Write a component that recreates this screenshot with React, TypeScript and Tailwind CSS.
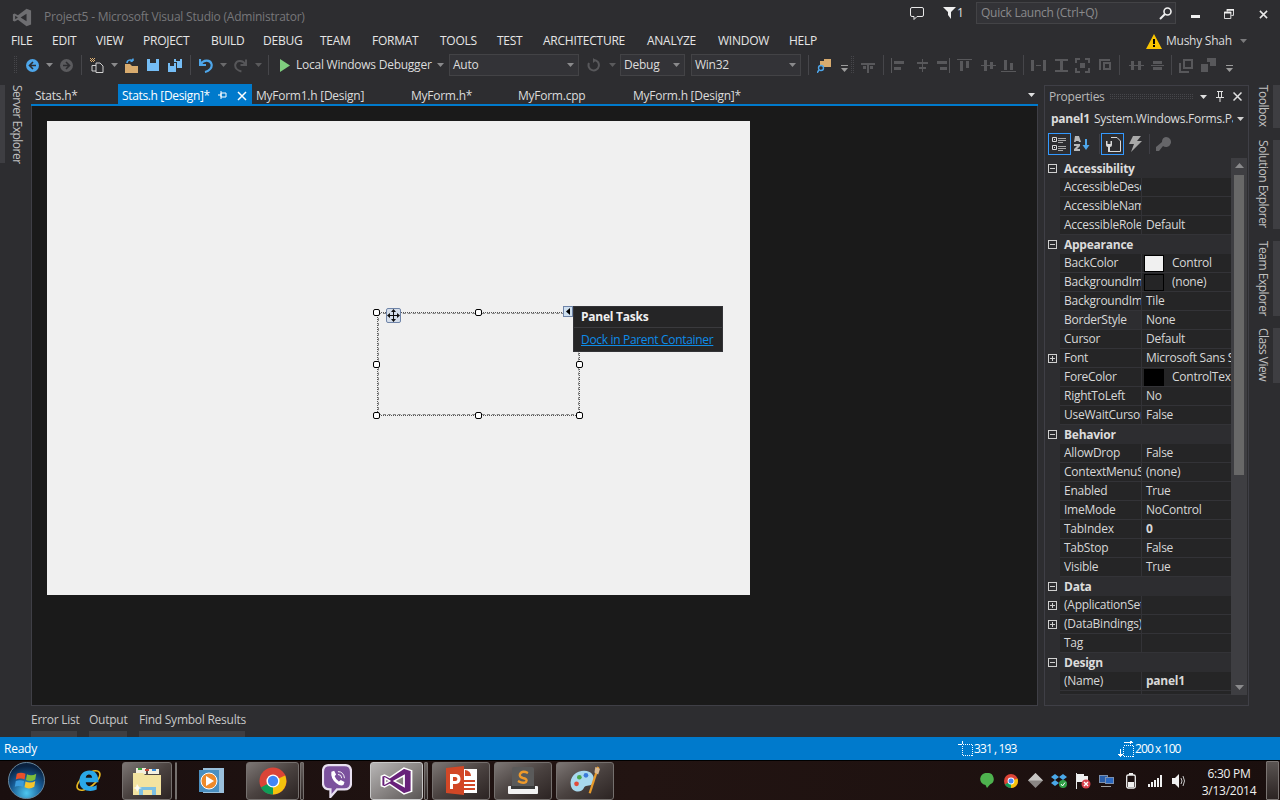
import React from "react";

const VSPATH = "M15 0 L5.5 9 L2 6.5 L0 7.5 V16.5 L2 17.5 L5.5 15 L15 24 L20 21.5 V2.5 Z M15 7 V17 L8.5 12 Z M2.5 9.5 L5.5 12 L2.5 14.5 Z";

function VS({ size, color, h, stroke }: { size: number; color: string; h?: number; stroke?: string }) {
  return (
    <svg width={size} height={h ?? size} viewBox="-1 -1 22 26" preserveAspectRatio="none">
      <path d={VSPATH} fill={color} fillRule="evenodd" stroke={stroke} strokeWidth={stroke ? 1.2 : 0} />
    </svg>
  );
}

function Drop({ c = "#8a8a8c", className = "" }: { c?: string; className?: string }) {
  return (
    <svg width="7" height="4" viewBox="0 0 7 4" className={`shrink-0 ${className}`}>
      <path d="M0 0H7L3.5 4Z" fill={c} />
    </svg>
  );
}

function Overflow({ className = "" }: { className?: string }) {
  return (
    <svg width="7" height="7" viewBox="0 0 7 7" className={`shrink-0 ${className}`}>
      <rect x="0" y="0" width="7" height="1" fill="#9a9a9a" />
      <path d="M0 3H7L3.5 7Z" fill="#9a9a9a" />
    </svg>
  );
}

function Grip({ w = 3, h = 18, className = "" }: { w?: number; h?: number; className?: string }) {
  return (
    <svg width={w} height={h} className={`shrink-0 ${className}`}>
      <defs>
        <pattern id={`g${w}${h}`} width="2" height="2" patternUnits="userSpaceOnUse">
          <rect width="1" height="1" fill="#46464a" />
        </pattern>
      </defs>
      <rect width={w} height={h} fill={`url(#g${w}${h})`} />
    </svg>
  );
}

function Sep({ className = "" }: { className?: string }) {
  return <div className={`w-px h-[20px] bg-[#46464a] shrink-0 ${className}`} />;
}

function Combo({ label, w, ml }: { label: string; w: string; ml: string }) {
  return (
    <div className={`${w} ${ml} h-[22px] shrink-0 border border-[#434346] bg-[#333337] flex items-center justify-between pl-[3px] pr-[4px] text-[#dcdcdc]`}>
      <span>{label}</span>
      <Drop />
    </div>
  );
}

function AlignIcon({ d, ml }: { d: string; ml: string }) {
  return (
    <svg width="15" height="15" viewBox="0 0 15 15" className={`${ml} shrink-0`}>
      <path d={d} fill="#58585b" />
    </svg>
  );
}

const ALIGN: { d: string; ml: string; sep?: string }[] = [
  { d: "M0 5H14V7H8V15H6V7H0Z M2 8h3v3H2z M9 8h3v3H9z", ml: "ml-[7px]", sep: "ml-[7px]" },
  { d: "M0 0H1V15H0Z M3 3H13V6H3Z M3 9H10V12H3Z", ml: "ml-[7px]" },
  { d: "M7 1H8V14H7Z M2 4H13V6H2Z M4 9H11V11H4Z", ml: "ml-[9px]" },
  { d: "M14 0H15V15H14Z M2 3H12V6H2Z M5 9H12V12H5Z", ml: "ml-[5px]" },
  { d: "M0 1H15V2H0Z M3 3H6V13H3Z M9 3H12V10H9Z", ml: "ml-[7px]" },
  { d: "M0 7H15V8H0Z M3 2H6V13H3Z M9 4H12V11H9Z", ml: "ml-[9px]" },
  { d: "M0 13H15V14H0Z M3 2H6V12H3Z M9 5H12V12H9Z", ml: "ml-[5px]", sep: "ml-[7px]" },
  { d: "M0 2H3V13H0Z M12 2H15V13H12Z M6 5L9 10M9 5L6 10M5 7H10V8H5Z", ml: "ml-[7px]" },
  { d: "M1 1H14V3H9V12H14V14H1V12H6V3H1Z", ml: "ml-[8px]" },
  { d: "M0 0H5V2H2V5H0Z M10 0H15V5H13V2H10Z M0 10H2V13H5V15H0Z M13 10H15V15H10V13H13Z M5 5H10V10H5Z", ml: "ml-[6px]" },
  { d: "M2 1H13V3H4V12H2Z M6 4H14V12H6Z M8 6V10H12V6Z", ml: "ml-[7px]", sep: "ml-[7px]" },
  { d: "M2 3H5V12H2Z M9 3H12V12H9Z M0 7H15V8H0Z", ml: "ml-[9px]" },
  { d: "M1 7H14V8H1Z M3 3H12V6H3Z M3 9H12V12H3Z", ml: "ml-[6px]", sep: "ml-[6px]" },
  { d: "M0 5H2V13H10V15H0Z M4 1H14V11H4Z M6 3V9H12V3Z", ml: "ml-[7px]" },
  { d: "M0 6H7V14H0Z M6 0H15V8H9V4H6Z", ml: "ml-[7px]" },
];

function Toolbar() {
  return (
    <div className="h-[26px] flex items-center shrink-0 pl-[14px]">
      <Grip />
      <svg width="13" height="13" viewBox="0 0 13 13" className="ml-[9px] shrink-0">
        <circle cx="6.5" cy="6.5" r="6.5" fill="#4ea6ea" />
        <path d="M7 3L3.5 6.5L7 10M4 6.5H10" stroke="#2d2d30" strokeWidth="1.6" fill="none" />
      </svg>
      <Drop className="ml-[7px]" />
      <svg width="13" height="13" viewBox="0 0 13 13" className="ml-[7px] shrink-0">
        <circle cx="6.5" cy="6.5" r="6.5" fill="#5b5b5e" />
        <path d="M6 3L9.5 6.5L6 10M3 6.5H9" stroke="#2d2d30" strokeWidth="1.6" fill="none" />
      </svg>
      <Sep className="ml-[8px]" />
      <svg width="14" height="15" viewBox="0 0 14 15" className="ml-[8px] shrink-0">
        <path d="M6 5H10L13 8V14.500H6Z M2 7.500H6M2 7.500V13H6" stroke="#d0d0d0" fill="none" />
        <path d="M0 0H1V1H0Z M2 0H3V1H2Z M4 0H5V1H4Z M1 1H2V2H1Z M3 1H4V2H3Z M0 2H1V3H0Z M2 2H3V3H2Z M4 2H5V3H4Z M1 3H2V4H1Z M3 3H4V4H3Z" fill="#e0b070" />
      </svg>
      <Drop className="ml-[7px]" />
      <svg width="15" height="15" viewBox="0 0 15 15" className="ml-[6px] shrink-0">
        <path d="M1 6H6L8 8H14V15H1Z" fill="#d8ab6e" />
        <path d="M3 5C3 2 7 1 9 3M9 3V0.500M9 3L6.500 3.500" stroke="#4ea6ea" strokeWidth="1.500" fill="none" />
      </svg>
      <svg width="12" height="12" viewBox="0 0 12 12" className="ml-[8px] shrink-0">
        <path d="M0 0H12V12H0Z M3 0V4H9V0Z" fill="#75bdf5" fillRule="evenodd" />
      </svg>
      <svg width="14" height="13" viewBox="0 0 14 13" className="ml-[9px] shrink-0">
        <path d="M0 4H8V13H0Z M2 4V7H6V4Z" fill="#75bdf5" fillRule="evenodd" />
        <path d="M6 0H14V9H9V3H6Z M8 0V2H12V0Z" fill="#75bdf5" fillRule="evenodd" />
      </svg>
      <Sep className="ml-[8px]" />
      <svg width="14" height="15" viewBox="0 0 14 15" className="ml-[8px] shrink-0">
        <path d="M1 1V7H7M2 6C4 2 11 1 12.500 6C13.500 10 10 13 6 14" stroke="#4ea6ea" strokeWidth="2.200" fill="none" />
      </svg>
      <Drop className="ml-[7px]" c="#6a6a6c" />
      <svg width="13" height="15" viewBox="0 0 14 15" className="ml-[7px] shrink-0">
        <path d="M13 1V7H7M12 6C10 2 3 1 1.500 6C0.500 10 4 13 8 14" stroke="#565659" strokeWidth="2.200" fill="none" />
      </svg>
      <Drop className="ml-[8px]" c="#5a5a5c" />
      <Sep className="ml-[6px]" />
      <svg width="10" height="13" viewBox="0 0 10 13" className="ml-[11px] shrink-0">
        <path d="M0 0L10 6.500L0 13Z" fill="#7fce7f" />
      </svg>
      <span className="ml-[6px] w-[140px] shrink-0 whitespace-nowrap text-[#dcdcdc]">Local Windows Debugger</span>
      <Drop className="ml-[1px]" />
      <Combo label="Auto" w="w-[130px]" ml="ml-[5px]" />
      <svg width="13" height="14" viewBox="0 0 13 14" className="ml-[8px] shrink-0">
        <path d="M7 2A5.200 5.200 0 1 1 2 5" stroke="#58585b" strokeWidth="2" fill="none" />
        <path d="M6 0V5L9 2.500Z" fill="#58585b" />
      </svg>
      <Drop className="ml-[9px]" c="#5a5a5c" />
      <Combo label="Debug" w="w-[65px]" ml="ml-[4px]" />
      <Combo label="Win32" w="w-[110px]" ml="ml-[6px]" />
      <Sep className="ml-[7px]" />
      <svg width="15" height="15" viewBox="0 0 15 15" className="ml-[8px] shrink-0">
        <path d="M3 3H7V1H14V9H6V11H3Z" fill="#d8ab6e" />
        <circle cx="4" cy="10" r="2.500" stroke="#4ea6ea" fill="#2d2d30" strokeWidth="1.400" />
        <path d="M2 12L0 15" stroke="#4ea6ea" strokeWidth="1.600" />
      </svg>
      <Overflow className="ml-[9px] mt-[6px]" />
      <Grip className="ml-[3px]" />
      {ALIGN.map((a, i) => (
        <React.Fragment key={i}>
          <AlignIcon d={a.d} ml={a.ml} />
          {a.sep && <Sep className={a.sep} />}
        </React.Fragment>
      ))}
      <Overflow className="ml-[10px] mt-[6px]" />
    </div>
  );
}

const MENU: [string, string][] = [
  ["FILE", "w-[41px]"], ["EDIT", "w-[44px]"], ["VIEW", "w-[47px]"], ["PROJECT", "w-[68px]"], ["BUILD", "w-[52px]"],
  ["DEBUG", "w-[57px]"], ["TEAM", "w-[52px]"], ["FORMAT", "w-[68px]"], ["TOOLS", "w-[57px]"], ["TEST", "w-[46px]"],
  ["ARCHITECTURE", "w-[104px]"], ["ANALYZE", "w-[71px]"], ["WINDOW", "w-[71px]"], ["HELP", "w-[40px]"],
];

const TABS: [string, string][] = [
  ["MyForm1.h [Design]", "w-[155px]"], ["MyForm.h*", "w-[107px]"], ["MyForm.cpp", "w-[115px]"], ["MyForm.h [Design]*", "w-[200px]"],
];

type Row = { k: "h" | "r"; n: string; v?: string; plus?: boolean; bold?: boolean; swatch?: string; hl?: boolean };
const ROWS: Row[] = [
  { k: "h", n: "Accessibility" },
  { k: "r", n: "AccessibleDescription" },
  { k: "r", n: "AccessibleName" },
  { k: "r", n: "AccessibleRole", v: "Default" },
  { k: "h", n: "Appearance" },
  { k: "r", n: "BackColor", v: "Control", swatch: "#f0f0f0" },
  { k: "r", n: "BackgroundImage", v: "(none)", swatch: "#252526" },
  { k: "r", n: "BackgroundImageLayout", v: "Tile" },
  { k: "r", n: "BorderStyle", v: "None", hl: true },
  { k: "r", n: "Cursor", v: "Default" },
  { k: "r", n: "Font", v: "Microsoft Sans Serif, 8.25pt", plus: true },
  { k: "r", n: "ForeColor", v: "ControlText", swatch: "#000000" },
  { k: "r", n: "RightToLeft", v: "No" },
  { k: "r", n: "UseWaitCursor", v: "False" },
  { k: "h", n: "Behavior" },
  { k: "r", n: "AllowDrop", v: "False" },
  { k: "r", n: "ContextMenuStrip", v: "(none)" },
  { k: "r", n: "Enabled", v: "True" },
  { k: "r", n: "ImeMode", v: "NoControl" },
  { k: "r", n: "TabIndex", v: "0", bold: true },
  { k: "r", n: "TabStop", v: "False" },
  { k: "r", n: "Visible", v: "True" },
  { k: "h", n: "Data" },
  { k: "r", n: "(ApplicationSettings)", plus: true },
  { k: "r", n: "(DataBindings)", plus: true },
  { k: "r", n: "Tag" },
  { k: "h", n: "Design" },
  { k: "r", n: "(Name)", v: "panel1", bold: true },
  { k: "r", n: "" },
];

function Box({ minus }: { minus: boolean }) {
  return (
    <svg width="9" height="9" viewBox="0 0 9 9" className="shrink-0">
      <rect x="0.500" y="0.500" width="8" height="8" fill="none" stroke="#d0d0d0" />
      <rect x="2" y="4" width="5" height="1" fill="#d0d0d0" />
      {!minus && <rect x="4" y="2" width="1" height="5" fill="#d0d0d0" />}
    </svg>
  );
}

function PropRow({ r, last }: { r: Row; last: boolean }) {
  if (r.k === "h") {
    return (
      <div className="h-[19px] flex items-center bg-[#2d2d30] shrink-0">
        <div className="w-[15px] pl-[3px] flex items-center"><Box minus /></div>
        <span className="font-bold text-[#dcdcdc] ml-[4px]">{r.n}</span>
      </div>
    );
  }
  return (
    <div className={`${last ? "h-[4px]" : "h-[19px]"} flex shrink-0`}>
      <div className="w-[15px] bg-[#2d2d30] pl-[3px] flex items-center">{r.plus && <Box minus={false} />}</div>
      <div className={`w-[82px] ${r.hl ? "bg-[#2d2d30]" : "bg-[#252526]"} border-b border-r border-[#333337] pl-[4px] flex items-center overflow-hidden whitespace-nowrap text-[#d8d8d8]`}>{r.n}</div>
      <div className="w-[89px] bg-[#252526] border-b border-[#333337] flex items-center overflow-hidden whitespace-nowrap text-[#d8d8d8]">
        {r.swatch && (
          <div className="w-[20px] h-[17px] ml-[2px] mr-[8px] border border-black shrink-0" style={{ background: r.swatch }} />
        )}
        <span className={`${r.swatch ? "" : "pl-[4px]"} ${r.bold ? "font-bold" : ""}`}>{r.v}</span>
      </div>
    </div>
  );
}

function Properties() {
  return (
    <div className="w-[205px] ml-[6px] h-[621px] border border-[#3f3f46] flex flex-col shrink-0">
      <div className="h-[21px] flex items-center shrink-0 pl-[4px] text-[#b8b8b8]">
        <span className="w-[61px] shrink-0">Properties</span>
        <Grip w={83} h={5} />
        <Drop c="#e0e0e0" className="ml-[7px]" />
        <svg width="8" height="11" viewBox="0 0 8 11" className="ml-[9px] shrink-0">
          <path d="M1 0H7V1H6V6H8V7H4.500V11H3.500V7H0V6H2V1H1Z M3 1V6H5V1Z" fill="#e0e0e0" fillRule="evenodd" />
        </svg>
        <svg width="9" height="9" viewBox="0 0 9 9" className="ml-[9px] shrink-0">
          <path d="M0.500 0.500L8.500 8.500M8.500 0.500L0.500 8.500" stroke="#e0e0e0" strokeWidth="1.500" />
        </svg>
      </div>
      <div className="h-[24px] flex items-center shrink-0 pl-[6px] text-[#dcdcdc]">
        <span className="font-bold w-[43px] shrink-0">panel1</span>
        <span className="w-[139px] overflow-hidden whitespace-nowrap shrink-0">System.Windows.Forms.Panel</span>
        <Drop c="#d0d0d0" className="ml-[4px]" />
      </div>
      <div className="h-[27px] flex items-start pt-[2px] shrink-0 pl-[3px]">
        <div className="w-[23px] h-[22px] border border-[#3399ff] flex items-center justify-center">
          <svg width="15" height="14" viewBox="0 0 15 14">
            <path d="M0.500 0.500H4.500V4.500H0.500Z M0.500 8.500H4.500V12.500H0.500Z" fill="none" stroke="#d8d8d8" />
            <path d="M2 2.500H3M2 10.500H3" stroke="#d8d8d8" />
            <path d="M6 1.500H14M6 3.500H14M6 5.500H11M6 9.500H14M6 11.500H14M6 13.500H11" stroke="#a8a8a8" />
          </svg>
        </div>
        <svg width="16" height="15" viewBox="0 0 16 15" className="ml-[3px] mt-[3px] shrink-0">
          <path d="M1 0H5L7 6H5L4.500 5H2L1.500 6H0Z M0 8H6V10L3 13H6V15H0V13L3 10H0Z" fill="#b8b8b8" />
          <path d="M11 3H13V9H15.500L12 14L8.500 9H11Z" fill="#4ea6ea" />
        </svg>
        <div className="w-px h-[20px] bg-[#3f3f46] ml-[9px] mt-[1px] shrink-0" />
        <div className="w-[23px] h-[22px] border border-[#3399ff] flex items-center justify-center ml-[1px] shrink-0">
          <svg width="16" height="15" viewBox="0 0 16 15">
            <path d="M6 0.500H12L15.500 4V14.500H3" stroke="#d8d8d8" fill="none" />
            <path d="M1 4V8Q1 10 3 10V15H5V10Q7 10 7 8V4H5.500V7H2.500V4Z" fill="#d8d8d8" />
          </svg>
        </div>
        <svg width="13" height="16" viewBox="0 0 13 16" className="ml-[5px] mt-[3px] shrink-0">
          <path d="M4 0H12L8 5H13L2 16L5 8H0Z" fill="#a8a8a8" />
        </svg>
        <div className="w-px h-[20px] bg-[#3f3f46] ml-[7px] mt-[1px] shrink-0" />
        <svg width="15" height="14" viewBox="0 0 15 14" className="ml-[6px] mt-[4px] shrink-0">
          <path d="M10 0A5 5 0 1 1 7 9L3 14H0V10L6 5A5 5 0 0 1 10 0Z" fill="#666669" />
        </svg>
      </div>
      <div className="flex h-[537px] shrink-0 overflow-hidden">
        <div className="w-[186px] pt-[1px] flex flex-col shrink-0 overflow-hidden bg-[#2d2d30]">
          {ROWS.map((r, i) => (
            <PropRow key={i} r={r} last={i === ROWS.length - 1} />
          ))}
        </div>
        <div className="w-[16px] bg-[#3e3e42] flex flex-col items-center shrink-0">
          <svg width="9" height="5" viewBox="0 0 9 5" className="mt-[5px]"><path d="M0 5H9L4.500 0Z" fill="#8a8a8c" /></svg>
          <div className="w-[10px] h-[300px] mt-[7px] bg-[#686868]" />
          <div className="flex-1" />
          <svg width="9" height="5" viewBox="0 0 9 5" className="mb-[5px]"><path d="M0 0H9L4.500 5Z" fill="#8a8a8c" /></svg>
        </div>
      </div>
    </div>
  );
}

function VTab({ label, h, mt }: { label: string; h: string; mt: string }) {
  return (
    <div className={`${h} ${mt} flex shrink-0 justify-end`}>
      <span className="[writing-mode:vertical-rl] w-[18px] whitespace-nowrap text-[#c0c0c0] tracking-[-0.5px] leading-[18px]">{label}</span>
      <div className="w-[7px] h-full bg-[#3e3e42] ml-[1px]" />
    </div>
  );
}

function Handle({ className }: { className: string }) {
  return <div className={`absolute w-[7px] h-[7px] bg-white border border-black rounded-[2px] ${className}`} />;
}

function Designer() {
  return (
    <div className="flex-1 bg-[#1a1a1a] border border-t-0 border-[#3f3f46] pl-[15px] pt-[15px]">
      <div className="w-[703px] h-[474px] bg-[#f0f0f0] relative">
        <div className="absolute left-[330px] top-[191px] w-[203px] h-[104px] border border-dotted border-[#555]">
          <div className="w-full h-full border border-dashed border-[#888]" />
        </div>
        <Handle className="left-[326px] top-[188px]" />
        <Handle className="left-[428px] top-[188px]" />
        <Handle className="left-[529px] top-[240px]" />
        <Handle className="left-[326px] top-[240px]" />
        <Handle className="left-[326px] top-[291px]" />
        <Handle className="left-[428px] top-[291px]" />
        <Handle className="left-[529px] top-[291px]" />
        <div className="absolute left-[339px] top-[187px] w-[15px] h-[15px] bg-[#d5deea] border border-[#6f84a8] rounded-[2px] flex items-center justify-center">
          <svg width="13" height="13" viewBox="0 0 13 13">
            <path d="M6.500 0L9 3H7V6H10V4L13 6.500L10 9V7H7V10H9L6.500 13L4 10H6V7H3V9L0 6.500L3 4V6H6V3H4Z" fill="#101010" />
          </svg>
        </div>
        <div className="absolute left-[516px] top-[185px] w-[10px] h-[11px] bg-[#cfe0f0] border border-[#6f84a8] flex items-center justify-center">
          <svg width="4" height="7" viewBox="0 0 4 7"><path d="M4 0V7L0 3.500Z" fill="#000" /></svg>
        </div>
        <div className="absolute left-[526px] top-[185px] w-[150px] h-[46px] bg-[#252526] border border-[#333337] flex flex-col">
          <div className="h-[21px] flex items-center pl-[7px] font-bold text-[#f0f0f0] border-b border-[#3a3a3d]">Panel Tasks</div>
          <div className="flex-1 flex items-center pl-[7px] text-[#0e8ce8] underline whitespace-nowrap tracking-[-0.32px]">Dock in Parent Container</div>
        </div>
      </div>
    </div>
  );
}

function TaskBtn({ w, ml, active, children }: { w: string; ml: string; active?: boolean; children?: React.ReactNode }) {
  return (
    <div className={`${w} ${ml} h-[38px] shrink-0 rounded-[3px] border flex items-center justify-center ${active ? "border-[#c8c8c8] bg-gradient-to-br from-[#b8b6b6] via-[#8a8685] to-[#5a5655]" : "border-[#75706e] bg-gradient-to-br from-[#7c7674] via-[#4a4240] to-[#2c2423]"}`}>
      {children}
    </div>
  );
}

function Sliver({ c }: { c: string }) {
  return <div className={`${c} h-[38px] shrink-0 rounded-[1px] border border-[#75706e] bg-gradient-to-b from-[#6a6462] to-[#2c2423]`} />;
}

function Taskbar() {
  return (
    <div className="h-[40px] flex items-center shrink-0 bg-gradient-to-r from-[#1a0f0f] via-[#221412] to-[#1a0f0e] border-t border-[#000]">
      <svg width="37" height="37" viewBox="0 0 38 38" className="ml-[8px] shrink-0">
        <defs>
          <radialGradient id="orb" cx="50%" cy="85%" r="75%">
            <stop offset="0" stopColor="#4ec7f0" />
            <stop offset="0.6" stopColor="#15568f" />
            <stop offset="1" stopColor="#0a2240" />
          </radialGradient>
        </defs>
        <circle cx="19" cy="19" r="18.500" fill="url(#orb)" stroke="#6a8aa0" />
        <path d="M9 12Q13 10 18 12L17 18Q13 16 8 18Z" fill="#e8502a" />
        <path d="M19.500 12.500Q24 15 29 12L28 18Q23 21 18.500 18.500Z" fill="#7cbc3a" />
        <path d="M8 19.500Q12 18 16.500 19.500L15.500 25.500Q11 24 7 25.500Z" fill="#3b9bdc" />
        <path d="M18 20Q23 22.500 28 19.500L27 25.500Q22 28.500 17 26Z" fill="#f5c42c" />
      </svg>
      <svg width="29" height="31" viewBox="0 0 32 32" className="ml-[29px] shrink-0">
        <ellipse cx="16" cy="16" rx="15" ry="7" transform="rotate(-38 16 16)" fill="none" stroke="#e8b820" strokeWidth="1.800" />
        <path fillRule="evenodd" d="M6 17C6 9 11 5 17 5C24 5 27 10 27 18H13C13 23 21 24 25 21V26C19 29 6 28 6 17Z M13 13H20C20 8 13 8 13 13Z" fill="#2aa7e8" />
      </svg>
      <TaskBtn w="w-[50px]" ml="ml-[19px]">
        <svg width="28" height="29" viewBox="0 0 28 29">
          <path d="M3 2H13V8H3Z" fill="#f4f0e0" />
          <path d="M15 3H26V8H15Z" fill="#f4f0e0" />
          <path d="M5 2h4v2H5z" fill="#3ea63e" />
          <path d="M12 3h4v2h-4z" fill="#c8483a" />
          <path d="M19 3h4v2h-4z" fill="#3a8ad8" />
          <path d="M0 7H10L12 9H28V29H0Z" fill="#f3e3a0" />
          <path d="M6 21H23V29H19V24H10V29H6Z" fill="#7cc0e4" />
          <path d="M4 18L6 21L9 22L6 23L4 26L3 23L0 22L3 21Z" fill="#fff" opacity="0.850" />
        </svg>
      </TaskBtn>
      <Sliver c="w-[2px] ml-[3px]" />
      <svg width="25" height="25" viewBox="0 0 25 25" className="ml-[22px] shrink-0">
        <rect x="4" y="0" width="21" height="25" fill="#9ac0dc" />
        <rect x="0" y="2" width="20" height="22" fill="#4a8fc0" />
        <circle cx="10" cy="13" r="8" fill="#ef8a2a" stroke="#fff" strokeWidth="1" />
        <path d="M7 8L15 13L7 18Z" fill="#fff" />
      </svg>
      <TaskBtn w="w-[53px]" ml="ml-[22px]">
        <svg width="28" height="28" viewBox="0 0 30 30">
          <circle cx="15" cy="15" r="14.500" fill="#db4437" />
          <path d="M15 15L2 22A14.500 14.500 0 0 0 15 29.500Z" fill="#0f9d58" />
          <path d="M15 15L28 9A14.500 14.500 0 0 1 15 29.500Z" fill="#f4c20d" />
          <circle cx="15" cy="15" r="7" fill="#fff" />
          <circle cx="15" cy="15" r="5.500" fill="#4285f4" />
        </svg>
      </TaskBtn>
      <Sliver c="w-[4px] ml-[1px]" />
      <svg width="30" height="34" viewBox="0 0 32 36" className="ml-[18px] shrink-0">
        <path d="M8 1H24Q31 1 31 8V20Q31 27 24 27H16L9 35V27Q1 27 1 20V8Q1 1 8 1Z" fill="#7b519d" stroke="#e8e0f0" strokeWidth="2.400" />
        <path d="M10 8L13 7L15 11L13.500 13Q15 17 18 18.500L20 17L24 19L23 22Q20 24 15 20Q9 15 10 8Z" fill="#fff" />
        <path d="M17 8Q23 8 24 15M17 11Q21 11 21 15" stroke="#fff" fill="none" />
      </svg>
      <TaskBtn w="w-[53px]" ml="ml-[18px]" active>
        <VS size={33} h={28} color="#68217a" stroke="#ffffff" />
      </TaskBtn>
      <Sliver c="w-[4px] ml-[1px]" />
      <TaskBtn w="w-[58px]" ml="ml-[4px]">
        <svg width="31" height="29" viewBox="0 0 31 29">
          <rect x="13" y="3" width="18" height="24" fill="#fff" />
          <path d="M16 14h13v2H16zM16 18h13v2H16zM16 22h13v2H16z" fill="#d24726" />
          <path d="M19 4A6 6 0 0 1 25 10H19Z" fill="#d24726" />
          <path d="M0 2L18 0V29L0 27Z" fill="#d24726" />
          <path fillRule="evenodd" d="M4 8H10C16 8 16 18 10 18H7V23H4Z M7 11V15H9.500C12 15 12 11 9.500 11Z" fill="#fff" />
        </svg>
      </TaskBtn>
      <TaskBtn w="w-[58px]" ml="ml-[4px]">
        <svg width="30" height="27" viewBox="0 0 30 27">
          <rect x="4" y="0" width="22" height="21" rx="2" fill="#5a5a5a" />
          <rect x="0" y="19" width="30" height="8" rx="1" fill="#f2f2f2" />
          <rect x="3" y="19" width="24" height="3" fill="#3a3a3a" />
          <path d="M20 6Q14 3 12 7Q11 10 15 11Q20 12 18 15Q15 17 10 14" stroke="#ef9a2a" strokeWidth="2.400" fill="none" />
        </svg>
      </TaskBtn>
      <TaskBtn w="w-[58px]" ml="ml-[4px]">
        <svg width="32" height="32" viewBox="0 0 34 34">
          <path d="M2 22C0 12 8 6 16 6C24 6 28 12 26 18C24 24 18 20 16 24C14 30 4 30 2 22Z" fill="#a8d8ee" />
          <circle cx="8" cy="20" r="2.500" fill="#e04a3a" />
          <circle cx="11" cy="13" r="2.500" fill="#4aa84a" />
          <circle cx="18" cy="11" r="2.500" fill="#3a7ad8" />
          <path d="M31 2L22 30" stroke="#e89a2a" strokeWidth="2.400" />
          <path d="M28 2L33 4L31 10L27 8Z" fill="#d8b890" />
        </svg>
      </TaskBtn>
      <div className="flex-1 flex items-center">
        <svg width="14" height="15" viewBox="0 0 14 15" className="ml-[366px] shrink-0">
          <path d="M7 0A6 6 0 0 1 10 11.500L7 15L5.500 12A6 6 0 0 1 7 0Z" fill="#4eb24e" />
        </svg>
        <svg width="14" height="14" viewBox="0 0 14 14" className="ml-[10px] shrink-0">
          <circle cx="7" cy="7" r="7" fill="#db4437" />
          <path d="M7 7L1 10.500A7 7 0 0 0 7 14Z" fill="#0f9d58" />
          <path d="M7 7L13.500 4.500A7 7 0 0 1 7 14Z" fill="#f4c20d" />
          <circle cx="7" cy="7" r="3.400" fill="#fff" />
          <circle cx="7" cy="7" r="2.500" fill="#4285f4" />
        </svg>
        <svg width="15" height="15" viewBox="0 0 15 15" className="ml-[10px] shrink-0">
          <path d="M7.500 0L15 7.500L7.500 15L0 7.500Z" fill="#8a8684" />
          <path d="M7.500 0L15 7.500H0Z" fill="#c8c6c4" />
        </svg>
        <svg width="16" height="15" viewBox="0 0 16 15" className="ml-[8px] shrink-0">
          <path d="M4 1L8 4L4 7L0 4Z M12 1L16 4L12 7L8 4Z M4 7L8 10L4 13L0 10Z M12 7L16 10L12 13L8 10Z" fill="#4aa8e8" />
          <circle cx="12" cy="11" r="4" fill="#2f9e44" />
          <path d="M10 11L11.500 13L14 9.500" stroke="#fff" fill="none" />
        </svg>
        <svg width="15" height="16" viewBox="0 0 15 16" className="ml-[9px] shrink-0">
          <path d="M0.500 0V16" stroke="#e8e8e8" />
          <path d="M1 1H8V3H12V9H1Z" fill="#f0f0f0" />
          <circle cx="10" cy="11" r="4.500" fill="#d8404a" />
          <path d="M8 9L12 13M12 9L8 13" stroke="#fff" strokeWidth="1.400" />
        </svg>
        <svg width="15" height="14" viewBox="0 0 15 14" className="ml-[8px] shrink-0">
          <rect x="0.500" y="1.500" width="8" height="7" fill="#2a5ea8" stroke="#7a90b0" />
          <rect x="6.500" y="3.500" width="8" height="6" fill="#2a68c0" stroke="#7a90b0" />
          <path d="M2 12.500H12" stroke="#a0a0a0" />
        </svg>
        <svg width="10" height="16" viewBox="0 0 10 16" className="ml-[12px] shrink-0">
          <rect x="0.700" y="2" width="8.600" height="13" rx="1.500" fill="none" stroke="#f0f0f0" strokeWidth="1.300" />
          <rect x="3" y="0" width="4" height="2" fill="#f0f0f0" />
          <rect x="2" y="9" width="6" height="5" fill="#f0f0f0" />
        </svg>
        <svg width="14" height="12" viewBox="0 0 14 12" className="ml-[12px] shrink-0">
          <path d="M0 9h2v3H0z M3 7h2v5H3z M6 5h2v7H6z M9 3h2v9H9z M12 0h2v12h-2z" fill="#f0f0f0" />
        </svg>
        <svg width="14" height="14" viewBox="0 0 14 14" className="ml-[10px] shrink-0">
          <path d="M0 4H3L7 0V14L3 10H0Z" fill="#f0f0f0" />
          <path d="M9 4Q11 7 9 10M11 2Q14 7 11 12" stroke="#c8c8c8" fill="none" />
        </svg>
        <div className="w-[74px] ml-[6px] pt-[2px] shrink-0 flex flex-col items-center text-[#f0f0f0] leading-[17px]">
          <span>6:30 PM</span>
          <span>3/13/2014</span>
        </div>
        <div className="w-[13px] h-[39px] border border-[#7a7472] rounded-[1px] bg-gradient-to-b from-[#5a5452] to-[#2c2423] shrink-0" />
      </div>
    </div>
  );
}

export default function App() {
  return (
    <div className="w-[1280px] h-[800px] overflow-hidden bg-[#2d2d30] flex flex-col font-['Open_Sans',sans-serif] text-[12px] tracking-[-0.25px]">
      {/* title bar */}
      <div className="h-[30px] flex items-start shrink-0">
        <div className="ml-[12px] mt-[8px] w-[20px]"><VS size={20} h={19} color="#6e6e71" /></div>
        <span className="ml-[12px] mt-[8px] leading-[18px] text-[#77777a] whitespace-nowrap tracking-[-0.22px]">Project5 - Microsoft Visual Studio (Administrator)</span>
        <div className="flex-1" />
        <svg width="14" height="14" viewBox="0 0 14 14" className="mt-[7px] shrink-0">
          <path d="M2 0.500H12Q13.500 0.500 13.500 2V8Q13.500 9.500 12 9.500H7L4 12.500V9.500H2Q0.500 9.500 0.500 8V2Q0.500 0.500 2 0.500Z" fill="none" stroke="#e8e8e8" />
        </svg>
        <svg width="13" height="12" viewBox="0 0 13 12" className="ml-[19px] mt-[7px] shrink-0">
          <path d="M0 0H13L8 5V12L5 8V5Z" fill="#f0f0f0" />
        </svg>
        <span className="ml-[1px] mt-[4px] leading-[18px] text-[#e0e0e0] w-[19px]">1</span>
        <div className="w-[200px] h-[22px] mt-[2px] border border-[#434346] bg-[#333337] flex items-center pl-[4px] pr-[3px] justify-between text-[#8a8a8c] shrink-0">
          <span>Quick Launch (Ctrl+Q)</span>
          <svg width="13" height="13" viewBox="0 0 13 13">
            <circle cx="8.500" cy="4.500" r="3.500" fill="none" stroke="#f0f0f0" strokeWidth="1.600" />
            <path d="M6 7L1 12" stroke="#f0f0f0" strokeWidth="2" />
          </svg>
        </div>
        <svg width="9" height="3" viewBox="0 0 9 3" className="ml-[15px] mt-[15px] shrink-0">
          <rect width="9" height="3" fill="#f0f0f0" />
        </svg>
        <svg width="10" height="10" viewBox="0 0 11 11" className="ml-[24px] mt-[9px] shrink-0">
          <path d="M3.500 3V0.500H10.500V7H8" fill="none" stroke="#f0f0f0" />
          <path d="M0.500 3.500H7.500V10.500H0.500Z" fill="none" stroke="#f0f0f0" />
          <path d="M0 3H8V5H0Z M3 0H11V2H3Z" fill="#f0f0f0" />
        </svg>
        <svg width="9" height="9" viewBox="0 0 10 10" className="ml-[25px] mr-[12px] mt-[10px] shrink-0">
          <path d="M1 1L9 9M9 1L1 9" stroke="#e8e8e8" strokeWidth="1.700" />
        </svg>
      </div>
      {/* menu */}
      <div className="h-[22px] flex items-center shrink-0 pl-[11px] text-[#e6e6e6]">
        {MENU.map(([m, w]) => (
          <span key={m} className={`${w} shrink-0 whitespace-nowrap`}>{m}</span>
        ))}
        <div className="flex-1" />
        <svg width="16" height="15" viewBox="0 0 16 15" className="shrink-0">
          <path d="M8 0L16 15H0Z" fill="#f8c400" />
          <path d="M7 5H9V10H7Z M7 11H9V13H7Z" fill="#000" />
        </svg>
        <span className="ml-[4px] w-[74px] text-[#dcdcdc] whitespace-nowrap">Mushy Shah</span>
        <Drop c="#7a7a7c" className="mr-[33px]" />
      </div>
      <Toolbar />
      <div className="h-[7px] shrink-0" />
      {/* main */}
      <div className="h-[621px] flex shrink-0">
        <div className="w-[31px] shrink-0 flex">
          <div className="w-[5px] h-[78px] bg-[#3e3e42]" />
          <span className="[writing-mode:vertical-rl] ml-[5px] h-[78px] w-[14px] leading-[14px] whitespace-nowrap text-[#c0c0c0] tracking-[-0.5px]">Server Explorer</span>
        </div>
        <div className="w-[1007px] flex flex-col shrink-0">
          <div className="h-[21px] flex items-center shrink-0 border-b-2 border-[#007acc] text-[#dcdcdc]">
            <div className="w-[87px] pl-[4px] pt-[2px] h-full flex items-center shrink-0">Stats.h*</div>
            <div className="w-[134px] pl-[4px] pt-[2px] h-[21px] flex items-center shrink-0 bg-[#007acc] text-white">
              <span className="w-[94px] whitespace-nowrap tracking-[-0.35px]">Stats.h [Design]*</span>
              <svg width="9" height="9" viewBox="0 0 9 9" className="ml-[2px] shrink-0">
                <path d="M3 2H8V6H3Z M0 4H3M3 0V8" stroke="#fff" fill="none" />
              </svg>
              <svg width="10" height="10" viewBox="0 0 10 10" className="ml-[10px] shrink-0">
                <path d="M1 1L9 9M9 1L1 9" stroke="#fff" strokeWidth="1.500" />
              </svg>
            </div>
            {TABS.map(([t, w]) => (
              <div key={t} className={`${w} pl-[4px] pt-[2px] h-full flex items-center shrink-0 whitespace-nowrap`}>{t}</div>
            ))}
            <div className="flex-1" />
            <Drop c="#e0e0e0" className="mr-[3px]" />
          </div>
          <Designer />
        </div>
        <Properties />
        <div className="flex flex-col w-[31px] shrink-0">
          <VTab label="Toolbox" h="h-[43px]" mt="mt-0" />
          <VTab label="Solution Explorer" h="h-[89px]" mt="mt-[12px]" />
          <VTab label="Team Explorer" h="h-[75px]" mt="mt-[12px]" />
          <VTab label="Class View" h="h-[55px]" mt="mt-[12px]" />
        </div>
      </div>
      {/* bottom tabs */}
      <div className="h-[31px] flex shrink-0 pl-[31px] pt-[6px] text-[#c8c8c8]">
        {[["Error List", "w-[46px]"], ["Output", "w-[38px] ml-[12px]"], ["Find Symbol Results", "w-[106px] ml-[12px]"]].map(([t, c]) => (
          <div key={t} className={`${c} flex flex-col whitespace-nowrap`}>
            <span className="h-[16px] leading-[16px]">{t}</span>
            <div className="flex-1 bg-[#3e3e42] mt-[3px]" />
          </div>
        ))}
      </div>
      {/* status */}
      <div className="h-[23px] flex items-center shrink-0 bg-[#007acc] pl-[4px] text-white">
        <span className="w-[954px]">Ready</span>
        <svg width="15" height="15" viewBox="0 0 15 15" className="shrink-0" shapeRendering="crispEdges">
          <path d="M0 3.500H4M4.500 0V3" stroke="#fff" />
          <rect x="4.500" y="3.500" width="10" height="11" fill="none" stroke="#fff" strokeDasharray="1 1" />
        </svg>
        <span className="ml-[1px] w-[144px] whitespace-nowrap tracking-[-0.9px]">331 , 193</span>
        <svg width="16" height="16" viewBox="0 0 16 16" className="shrink-0" shapeRendering="crispEdges">
          <rect x="5.500" y="4.500" width="10" height="11" fill="none" stroke="#fff" strokeDasharray="1 1" />
          <path d="M6 1.500H14M12 0L14 1.500L12 3M2.500 8V15M0.500 13L2.500 15L4.500 13" stroke="#fff" fill="none" />
        </svg>
        <span className="ml-[1px] whitespace-nowrap tracking-[-0.9px]">200 x 100</span>
      </div>
      <Taskbar />
    </div>
  );
}
